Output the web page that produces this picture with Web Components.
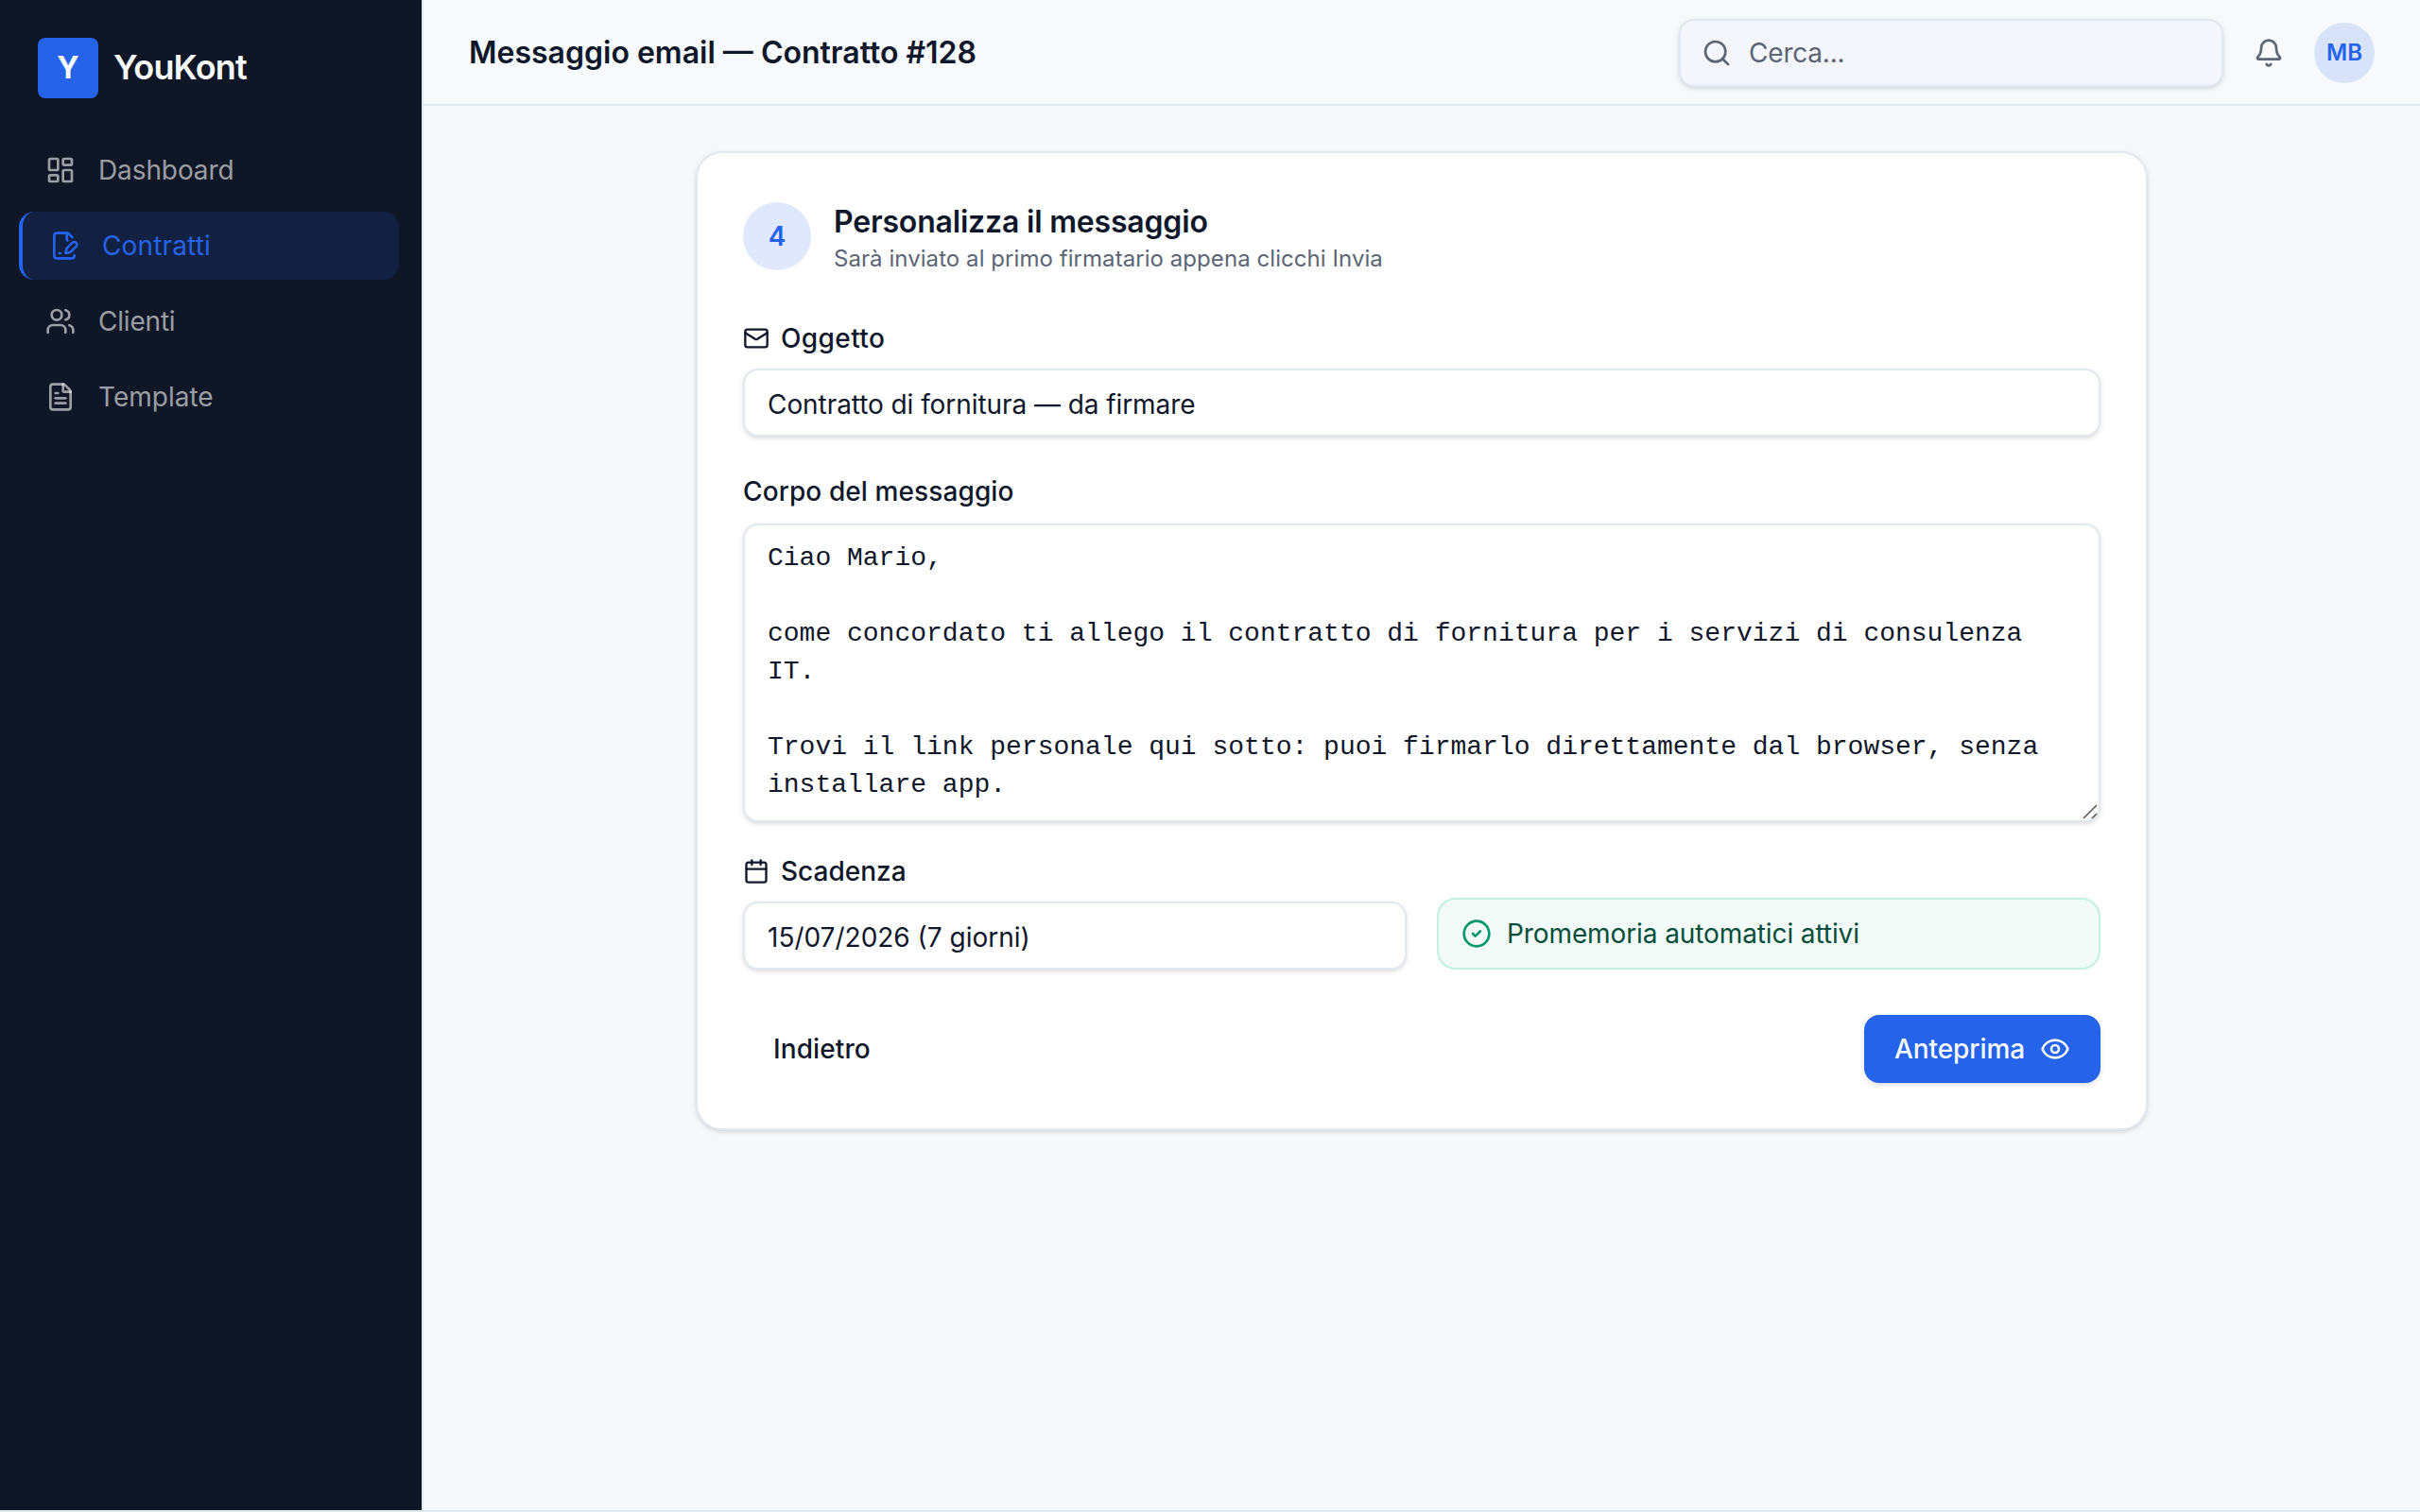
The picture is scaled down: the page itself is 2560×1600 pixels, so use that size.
<!DOCTYPE html>
<html lang="it">
<head>
<meta charset="utf-8">
<title>YouKont</title>
<style>
body {
    margin: 0;
    font-family: Inter, "Liberation Sans", sans-serif;
    font-size: 28px;
    line-height: 40px;
    color: #0f172a;
    --primary: #2563eb;
    --tint: rgba(37, 99, 235, 0.15);
    --line: #e2e8f0;
    --muted: #5b6575;
    --dark: #0f1625;
    --light: #f8fafc;
    --shadow: 0 2px 6px rgba(0, 0, 0, 0.1), 0 2px 4px -2px rgba(0, 0, 0, 0.1);
}
</style>
</head>
<body>
<yk-app>
    <yk-sidebar slot="side">
        <yk-nav-item icon="dashboard" style="letter-spacing: -0.1px">Dashboard</yk-nav-item>
        <yk-nav-item icon="sign" active style="letter-spacing: 0.15px">Contratti</yk-nav-item>
        <yk-nav-item icon="users" style="letter-spacing: -0.2px">Clienti</yk-nav-item>
        <yk-nav-item icon="file">Template</yk-nav-item>
    </yk-sidebar>
    <yk-topbar slot="top" initials="MB">Messaggio email — Contratto #128</yk-topbar>
    <yk-card step="4">
        <span slot="title">Personalizza il messaggio</span>
        <span slot="subtitle">Sarà inviato al primo firmatario appena clicchi Invia</span>
        <yk-field icon="mail" label="Oggetto" style="--label-spacing: 0.4px; letter-spacing: -0.07px">Contratto di fornitura — da firmare</yk-field>
        <yk-field label="Corpo del messaggio" multiline style="--label-spacing: 0.1px">Ciao Mario,

come concordato ti allego il contratto di fornitura per i servizi di consulenza IT.

Trovi il link personale qui sotto: puoi firmarlo direttamente dal browser, senza installare app.</yk-field>
        <yk-row>
            <yk-field icon="calendar" label="Scadenza">15/07/2026 (7 giorni)</yk-field>
            <yk-notice>Promemoria automatici attivi</yk-notice>
        </yk-row>
        <yk-button slot="actions" style="letter-spacing: 0.1px">Indietro</yk-button>
        <yk-button slot="actions" primary icon="eye" style="letter-spacing: -0.08px">Anteprima</yk-button>
    </yk-card>
</yk-app>

<script>
const icons = {
    dashboard: '<rect width="7" height="9" x="3" y="3" rx="1"/><rect width="7" height="5" x="14" y="3" rx="1"/><rect width="7" height="9" x="14" y="12" rx="1"/><rect width="7" height="5" x="3" y="16" rx="1"/>',
    sign: '<path d="M14.364 13.634a2 2 0 0 0-.506.854l-.837 2.87a.5.5 0 0 0 .62.62l2.87-.837a2 2 0 0 0 .854-.506l4.013-4.009a1 1 0 0 0-3.004-3.004z"/><path d="M14.487 7.858A1 1 0 0 1 14 7V2"/><path d="M20 19.645V20a2 2 0 0 1-2 2H6a2 2 0 0 1-2-2V4a2 2 0 0 1 2-2h8a2.4 2.4 0 0 1 1.704.706l2.516 2.516"/><path d="M8 18h1"/>',
    users: '<path d="M16 21v-2a4 4 0 0 0-4-4H6a4 4 0 0 0-4 4v2"/><path d="M16 3.128a4 4 0 0 1 0 7.744"/><path d="M22 21v-2a4 4 0 0 0-3-3.87"/><circle cx="9" cy="7" r="4"/>',
    file: '<path d="M6 22a2 2 0 0 1-2-2V4a2 2 0 0 1 2-2h8a2.4 2.4 0 0 1 1.704.706l3.588 3.588A2.4 2.4 0 0 1 20 8v12a2 2 0 0 1-2 2z"/><path d="M14 2v5a1 1 0 0 0 1 1h5"/><path d="M10 9H8"/><path d="M16 13H8"/><path d="M16 17H8"/>',
    search: '<path d="m21 21-4.34-4.34"/><circle cx="11" cy="11" r="8"/>',
    bell: '<path d="M10.268 21a2 2 0 0 0 3.464 0"/><path d="M3.262 15.326A1 1 0 0 0 4 17h16a1 1 0 0 0 .74-1.673C19.41 13.956 18 12.499 18 8A6 6 0 0 0 6 8c0 4.499-1.411 5.956-2.738 7.326"/>',
    mail: '<path d="m22 7-8.991 5.727a2 2 0 0 1-2.009 0L2 7"/><rect width="20" height="16" x="2" y="4" rx="2"/>',
    calendar: '<path d="M8 2v4"/><path d="M16 2v4"/><rect width="18" height="18" x="3" y="4" rx="2"/><path d="M3 10h18"/>',
    check: '<circle cx="12" cy="12" r="10"/><path d="m9 12 2 2 4-4"/>',
    eye: '<path d="M2.062 12.348a1 1 0 0 1 0-.696 10.75 10.75 0 0 1 19.876 0 1 1 0 0 1 0 .696 10.75 10.75 0 0 1-19.876 0"/><circle cx="12" cy="12" r="3"/>'
};

function icon(name, size = 32) {
    return `<svg width="${size}" height="${size}" viewBox="0 0 24 24" fill="none" stroke="currentColor" stroke-width="2" stroke-linecap="round" stroke-linejoin="round">${icons[name]}</svg>`;
}

class YkApp extends HTMLElement {
    constructor() {
        super();
        this.attachShadow({mode: 'open'});
        this.shadowRoot.innerHTML = `<style>
        :host {
            display: grid;
            grid-template-columns: 448px 1fr;
            height: 100vh;
            box-sizing: border-box;
            border-bottom: 2px solid var(--line);
            background: #f5f9fc;
        }
        .content {
            display: flex;
            flex-direction: column;
        }
        main {
            padding: 48px;
        }
        </style>
        <slot name="side"></slot>
        <div class="content">
            <slot name="top"></slot>
            <main><slot></slot></main>
        </div>`;
    }
}

class YkSidebar extends HTMLElement {
    constructor() {
        super();
        this.attachShadow({mode: 'open'});
        this.shadowRoot.innerHTML = `<style>
        :host {
            display: block;
            box-sizing: border-box;
            padding: 40px 24px 40px 20px;
            background: var(--dark);
            border-right: 2px solid var(--line);
        }
        .brand {
            display: flex;
            align-items: center;
            gap: 16px;
            padding-left: 20px;
            margin-bottom: 40px;
            font-size: 36px;
            font-weight: 600;
            letter-spacing: -0.023em;
            color: var(--light);
        }
        .name {
            padding-bottom: 2px;
        }
        .logo {
            display: grid;
            place-items: center;
            width: 64px;
            height: 64px;
            border-radius: 8px;
            background: var(--primary);
            font-size: 32px;
            font-weight: 700;
            letter-spacing: 0;
        }
        nav {
            display: flex;
            flex-direction: column;
            gap: 8px;
        }
        </style>
        <div class="brand"><span class="logo">Y</span><span class="name">YouKont</span></div>
        <nav><slot></slot></nav>`;
    }
}

class YkNavItem extends HTMLElement {
    constructor() {
        super();
        this.attachShadow({mode: 'open'});
        this.shadowRoot.innerHTML = `<style>
        :host {
            display: flex;
            align-items: center;
            gap: 24px;
            height: 72px;
            box-sizing: border-box;
            padding-left: 28px;
            border-radius: 16px;
            color: rgba(248, 250, 252, 0.6);
        }
        :host([active]) {
            border-left: 4px solid var(--primary);
            background: var(--tint);
            color: var(--primary);
        }
        </style>
        ${icon(this.getAttribute('icon'))}
        <slot></slot>`;
    }
}

class YkTopbar extends HTMLElement {
    constructor() {
        super();
        this.attachShadow({mode: 'open'});
        this.shadowRoot.innerHTML = `<style>
        :host {
            display: flex;
            align-items: center;
            gap: 16px;
            height: 112px;
            box-sizing: border-box;
            padding: 2px 48px 0;
            border-bottom: 2px solid var(--line);
            background: #f7fafd;
        }
        h1 {
            flex: 1;
            margin: 0;
            font-size: 32px;
            font-weight: 600;
        }
        .search {
            display: flex;
            align-items: center;
            gap: 18px;
            width: 576px;
            height: 72px;
            box-sizing: border-box;
            padding: 0 22px;
            border: 2px solid var(--line);
            border-radius: 16px;
            background: #f3f6fb;
            box-shadow: var(--shadow);
            color: var(--muted);
            letter-spacing: -0.2px;
        }
        .bell, .avatar {
            display: grid;
            place-items: center;
            width: 64px;
            height: 64px;
            color: var(--muted);
        }
        .avatar {
            border-radius: 50%;
            background: var(--tint);
            color: var(--primary);
            font-size: 24px;
            font-weight: 600;
        }
        </style>
        <h1><slot></slot></h1>
        <div class="search">${icon('search')}<span>Cerca...</span></div>
        <div class="bell">${icon('bell')}</div>
        <div class="avatar">${this.getAttribute('initials')}</div>`;
    }
}

class YkCard extends HTMLElement {
    constructor() {
        super();
        this.attachShadow({mode: 'open'});
        this.shadowRoot.innerHTML = `<style>
        :host {
            display: flex;
            flex-direction: column;
            width: 1536px;
            box-sizing: border-box;
            margin: 0 auto;
            padding: 48px;
            border: 2px solid var(--line);
            border-radius: 28px;
            background: #fff;
            box-shadow: var(--shadow);
        }
        header {
            display: flex;
            align-items: center;
            gap: 24px;
            margin-bottom: 48px;
        }
        .step {
            display: grid;
            place-items: center;
            width: 72px;
            height: 72px;
            border-radius: 50%;
            background: var(--tint);
            color: var(--primary);
            font-weight: 600;
        }
        h2, p {
            margin: 0;
        }
        h2 {
            margin-bottom: -2px;
            font-size: 32px;
            font-weight: 600;
            line-height: 50px;
            letter-spacing: -0.19px;
        }
        p {
            font-size: 24px;
            line-height: 32px;
            letter-spacing: 0.06px;
            color: var(--muted);
        }
        .body {
            display: flex;
            flex-direction: column;
            gap: 32px;
        }
        footer {
            display: flex;
            justify-content: space-between;
            margin-top: 48px;
        }
        </style>
        <header>
            <span class="step">${this.getAttribute('step')}</span>
            <div>
                <h2><slot name="title"></slot></h2>
                <p><slot name="subtitle"></slot></p>
            </div>
        </header>
        <div class="body"><slot></slot></div>
        <footer><slot name="actions"></slot></footer>`;
    }
}

class YkRow extends HTMLElement {
    constructor() {
        super();
        this.attachShadow({mode: 'open'});
        this.shadowRoot.innerHTML = `<style>
        :host {
            display: grid;
            grid-template-columns: 1fr 1fr;
            align-items: end;
            gap: 32px;
        }
        </style>
        <slot></slot>`;
    }
}

class YkField extends HTMLElement {
    constructor() {
        super();
        this.attachShadow({mode: 'open'});
        const name = this.getAttribute('icon');
        this.shadowRoot.innerHTML = `<style>
        :host {
            display: flex;
            flex-direction: column;
            gap: 12px;
        }
        .label {
            display: flex;
            align-items: center;
            gap: 12px;
            font-weight: 500;
            letter-spacing: var(--label-spacing, 0);
        }
        .box {
            position: relative;
            height: 72px;
            box-sizing: border-box;
            padding: 16px 24px 12px;
            border: 2px solid var(--line);
            border-radius: 16px;
            background: #fff;
            box-shadow: var(--shadow);
        }
        .grip {
            display: none;
        }
        :host([multiline]) .label {
            height: 48px;
            padding-top: 4px;
            box-sizing: border-box;
        }
        :host([multiline]) .box {
            height: 316px;
            padding: 15px 24px;
            font-family: "Liberation Mono", monospace;
            white-space: pre-wrap;
        }
        :host([multiline]) .grip {
            display: block;
            position: absolute;
            right: 0;
            bottom: 0;
        }
        </style>
        <div class="label">${name ? icon(name, 28) : ''}<span>${this.getAttribute('label')}</span></div>
        <div class="box"><slot></slot><svg class="grip" width="18" height="18" fill="none" stroke="#555" stroke-width="1.5"><path d="M2 16 16 2M11 16l5-5"/></svg></div>`;
    }
}

class YkNotice extends HTMLElement {
    constructor() {
        super();
        this.attachShadow({mode: 'open'});
        this.shadowRoot.innerHTML = `<style>
        :host {
            display: flex;
            align-items: center;
            gap: 16px;
            height: 76px;
            box-sizing: border-box;
            padding: 0 24px;
            border: 2px solid #c3f0df;
            border-radius: 20px;
            background: #f2fbf8;
            color: #064e3b;
            letter-spacing: -0.1px;
        }
        svg {
            color: #059669;
        }
        </style>
        ${icon('check')}
        <slot></slot>`;
    }
}

class YkButton extends HTMLElement {
    constructor() {
        super();
        this.attachShadow({mode: 'open'});
        const name = this.getAttribute('icon');
        this.shadowRoot.innerHTML = `<style>
        button {
            display: flex;
            align-items: center;
            gap: 16px;
            height: 72px;
            padding: 0 32px;
            border: 0;
            border-radius: 16px;
            background: none;
            color: inherit;
            font: inherit;
            font-weight: 500;
            letter-spacing: inherit;
        }
        :host([primary]) button {
            background: var(--primary);
            color: var(--light);
            box-shadow: var(--shadow);
        }
        </style>
        <button><slot></slot>${name ? icon(name) : ''}</button>`;
    }
}

customElements.define('yk-app', YkApp);
customElements.define('yk-sidebar', YkSidebar);
customElements.define('yk-nav-item', YkNavItem);
customElements.define('yk-topbar', YkTopbar);
customElements.define('yk-card', YkCard);
customElements.define('yk-row', YkRow);
customElements.define('yk-field', YkField);
customElements.define('yk-notice', YkNotice);
customElements.define('yk-button', YkButton);
</script>
</body>
</html>
